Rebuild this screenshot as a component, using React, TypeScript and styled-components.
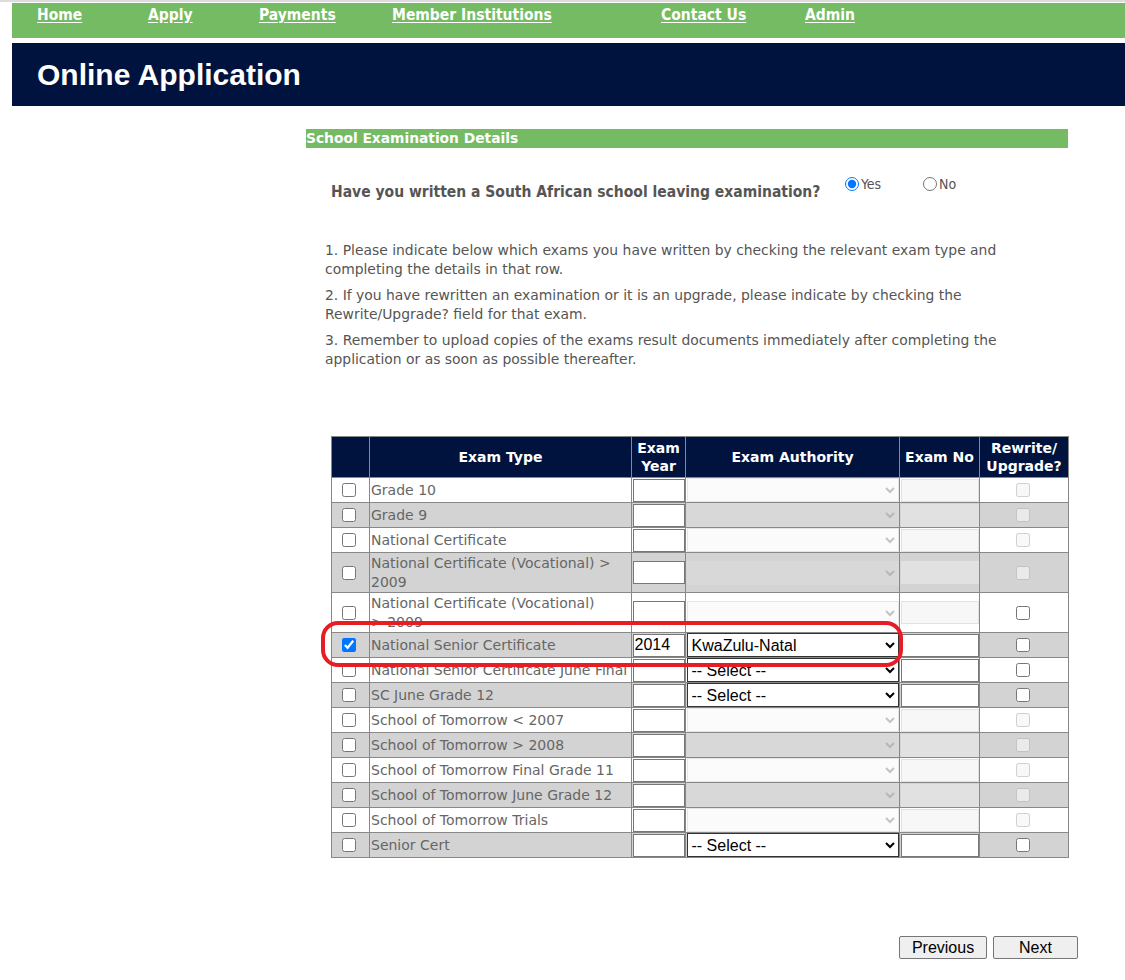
import React from "react";
import styled, { createGlobalStyle } from "styled-components";

const GlobalStyle = createGlobalStyle`
  html, body { margin: 0; padding: 0; background: #fff; }
  body { font-family: "DejaVu Sans", Verdana, sans-serif; }
`;

const COND = `"DejaVu Sans Condensed", "DejaVu Sans", sans-serif`;
const WIDE = `"DejaVu Sans", Verdana, sans-serif`;
const ARIAL = `"Liberation Sans", Arial, sans-serif`;

const Page = styled.div`
  border-top: 2px solid #dcdcdc;
  padding: 1px 0 0 12px;
  width: 1113px;
`;

const NavBar = styled.nav`
  background: #74bb63;
  height: 35px;
  display: flex;
  align-items: flex-start;
  padding-left: 25px;
  box-sizing: border-box;
`;

const NavLink = styled.a<{ $w: number }>`
  width: ${(p) => p.$w}px;
  flex: none;
  color: #fff;
  font-family: ${COND};
  font-weight: bold;
  font-size: 15.5px;
  line-height: 24px;
  text-decoration: underline;
  text-underline-offset: 2px;
  cursor: pointer;
`;

const Banner = styled.header`
  margin-top: 5px;
  background: #00133f;
  height: 63px;
  display: flex;
  align-items: center;
  padding-left: 25px;
`;

const Title = styled.h1`
  margin: 0;
  color: #fff;
  font-family: ${ARIAL};
  font-weight: bold;
  font-size: 30px;
  padding-top: 1px;
`;

const Content = styled.main`
  margin-left: 294px;
  width: 762px;
  display: flex;
  flex-direction: column;
  padding-top: 23px;
`;

const SectionHeader = styled.div`
  background: #74bb63;
  color: #fff;
  font-family: ${WIDE};
  font-weight: bold;
  font-size: 13.8px;
  height: 19px;
  line-height: 19px;
`;

const QuestionRow = styled.div`
  display: flex;
  align-items: flex-start;
  padding: 28px 0 0 25px;
  height: 41px;
  box-sizing: border-box;
`;

const Question = styled.span`
  font-family: ${COND};
  font-weight: bold;
  font-size: 15.5px;
  color: #555;
  margin-top: 7px;
  width: 514px;
`;

const RadioLabel = styled.label<{ $w: number }>`
  width: ${(p) => p.$w}px;
  display: flex;
  align-items: center;
  font-family: ${COND};
  font-size: 14px;
  color: #555;
  input { margin: 0 2px 0 0; width: 14px; height: 14px; }
`;

const Instructions = styled.div`
  margin-top: 52px;
  padding-left: 19px;
  width: 700px;
  font-family: ${WIDE};
  font-size: 13.9px;
  line-height: 19px;
  color: #555;
`;

const Para = styled.p`
  margin: 0 0 7px 0;
`;

const TableWrap = styled.div`
  position: relative;
  margin: 60px 0 0 25px;
  width: 737px;
`;

const Table = styled.table`
  border-collapse: collapse;
  width: 737px;
  table-layout: fixed;
  font-family: ${WIDE};
  font-size: 14px;
  color: #666;
`;

const HeadCell = styled.th`
  background: #00133f;
  color: #fff;
  font-family: ${WIDE};
  font-weight: bold;
  font-size: 14px;
  line-height: 18px;
  border: 1px solid #888;
  padding: 0;
  height: 40px;
  text-align: center;
`;

const Row = styled.tr<{ $alt: boolean }>`
  background: ${(p) => (p.$alt ? "#d3d3d3" : "#fff")};
`;

const Cell = styled.td<{ $h: number }>`
  border: 1px solid #888;
  padding: 0;
  height: ${(p) => p.$h - 1}px;
  text-align: center;
  vertical-align: middle;
`;

const LabelCell = styled.td<{ $nowrap: boolean }>`
  border: 1px solid #888;
  padding: 0 0 0 1px;
  text-align: left;
  vertical-align: middle;
  line-height: 19px;
  overflow: hidden;
  white-space: ${(p) => (p.$nowrap ? "nowrap" : "normal")};
`;

const Check = styled.input`
  margin: 0 3px 1px 0;
  width: 14px;
  height: 14px;
  vertical-align: middle;
`;

const YearInput = styled.input`
  box-sizing: border-box;
  width: 52px;
  height: 23px;
  margin: 0;
  padding: 0 1px;
  border: 1px solid #777;
  font-family: ${ARIAL};
  font-size: 16px;
  color: #000;
  background: #fff;
  vertical-align: middle;
`;

const AuthoritySelect = styled.select`
  box-sizing: border-box;
  width: 212px;
  height: 24px;
  margin: 0;
  font-family: ${ARIAL};
  font-size: 16px;
  color: #000;
  vertical-align: middle;
  border: 1px solid #333;
  border-radius: 0;
  background: #fff;
  &:disabled {
    border-color: #dcdcdc;
    background: rgba(239, 239, 239, 0.3);
    color: #aaa;
  }
`;

const NoInput = styled.input`
  box-sizing: border-box;
  width: 78px;
  height: 23px;
  margin: 0;
  border: 1px solid #777;
  background: #fff;
  vertical-align: middle;
  &:disabled {
    border-color: #e2e2e2;
    background: rgba(239, 239, 239, 0.5);
  }
`;

const Highlight = styled.div`
  position: absolute;
  left: -10px;
  top: 185px;
  width: 582px;
  height: 46px;
  box-sizing: border-box;
  border: 4px solid #e61d25;
  border-radius: 17px;
  pointer-events: none;
`;

const ButtonBar = styled.div`
  display: flex;
  justify-content: flex-end;
  gap: 6px;
  margin: 78px -10px 0 0;
`;

const Button = styled.button<{ $w: number }>`
  width: ${(p) => p.$w}px;
  height: 23px;
  box-sizing: border-box;
  font-family: ${ARIAL};
  font-size: 16px;
  color: #000;
  background: #efefef;
  border: 1px solid #767676;
  border-radius: 2px;
  padding: 0;
`;

type Exam = {
  label: string;
  h: number;
  enabled: boolean;
  rewrite: boolean;
  checked?: boolean;
  year?: string;
  authority?: string;
  nowrap?: boolean;
};

const exams: Exam[] = [
  { label: "Grade 10", h: 25, enabled: false, rewrite: false },
  { label: "Grade 9", h: 25, enabled: false, rewrite: false },
  { label: "National Certificate", h: 25, enabled: false, rewrite: false },
  { label: "National Certificate (Vocational) > 2009", h: 40, enabled: false, rewrite: false },
  { label: "National Certificate (Vocational) >\u00a02009", h: 40, enabled: false, rewrite: true },
  { label: "National Senior Certificate", h: 25, enabled: true, rewrite: true, checked: true, year: "2014", authority: "KwaZulu-Natal" },
  { label: "National Senior Certificate June Final", h: 25, enabled: true, rewrite: true, nowrap: true },
  { label: "SC June Grade 12", h: 25, enabled: true, rewrite: true },
  { label: "School of Tomorrow < 2007", h: 25, enabled: false, rewrite: false },
  { label: "School of Tomorrow > 2008", h: 25, enabled: false, rewrite: false },
  { label: "School of Tomorrow Final Grade 11", h: 25, enabled: false, rewrite: false },
  { label: "School of Tomorrow June Grade 12", h: 25, enabled: false, rewrite: false },
  { label: "School of Tomorrow Trials", h: 25, enabled: false, rewrite: false },
  { label: "Senior Cert", h: 25, enabled: true, rewrite: true },
];

const navItems: [string, number][] = [
  ["Home", 111],
  ["Apply", 111],
  ["Payments", 133],
  ["Member Institutions", 269],
  ["Contact Us", 144],
  ["Admin", 100],
];

export default function App() {
  return (
    <Page>
      <GlobalStyle />
      <NavBar>
        {navItems.map(([t, w]) => (
          <NavLink key={t} $w={w}>{t}</NavLink>
        ))}
      </NavBar>
      <Banner>
        <Title>Online Application</Title>
      </Banner>
      <Content>
        <SectionHeader>School Examination Details</SectionHeader>
        <QuestionRow>
          <Question>Have you written a South African school leaving examination?</Question>
          <RadioLabel $w={78}>
            <input type="radio" name="sa" defaultChecked />Yes
          </RadioLabel>
          <RadioLabel $w={60}>
            <input type="radio" name="sa" />No
          </RadioLabel>
        </QuestionRow>
        <Instructions>
          <Para>1. Please indicate below which exams you have written by checking the relevant exam type and completing the details in that row.</Para>
          <Para>2. If you have rewritten an examination or it is an upgrade, please indicate by checking the Rewrite/Upgrade? field for that exam.</Para>
          <Para>3. Remember to upload copies of the exams result documents immediately after completing the application or as soon as possible thereafter.</Para>
        </Instructions>
        <TableWrap>
          <Table>
            <colgroup>
              <col style={{ width: 38 }} />
              <col style={{ width: 262 }} />
              <col style={{ width: 54 }} />
              <col style={{ width: 214 }} />
              <col style={{ width: 80 }} />
              <col style={{ width: 89 }} />
            </colgroup>
            <thead>
              <tr>
                <HeadCell />
                <HeadCell>Exam Type</HeadCell>
                <HeadCell>Exam<br />Year</HeadCell>
                <HeadCell>Exam Authority</HeadCell>
                <HeadCell>Exam No</HeadCell>
                <HeadCell>Rewrite/<br />Upgrade?</HeadCell>
              </tr>
            </thead>
            <tbody>
              {exams.map((e, i) => (
                <Row key={i} $alt={i % 2 === 1}>
                  <Cell $h={e.h}>
                    <Check type="checkbox" defaultChecked={e.checked} />
                  </Cell>
                  <LabelCell $nowrap={!!e.nowrap}>{e.label}</LabelCell>
                  <Cell $h={e.h}>
                    <YearInput type="text" defaultValue={e.year ?? ""} />
                  </Cell>
                  <Cell $h={e.h}>
                    <AuthoritySelect disabled={!e.enabled} defaultValue={e.authority ?? (e.enabled ? "sel" : "")}>
                      {e.enabled ? (
                        <>
                          <option value="sel">-- Select --</option>
                          <option value="KwaZulu-Natal">KwaZulu-Natal</option>
                        </>
                      ) : (
                        <option value=""></option>
                      )}
                    </AuthoritySelect>
                  </Cell>
                  <Cell $h={e.h}>
                    <NoInput type="text" disabled={!e.enabled} />
                  </Cell>
                  <Cell $h={e.h}>
                    <Check type="checkbox" disabled={!e.rewrite} />
                  </Cell>
                </Row>
              ))}
            </tbody>
          </Table>
          <Highlight />
        </TableWrap>
        <ButtonBar>
          <Button $w={88}>Previous</Button>
          <Button $w={85}>Next</Button>
        </ButtonBar>
      </Content>
    </Page>
  );
}
